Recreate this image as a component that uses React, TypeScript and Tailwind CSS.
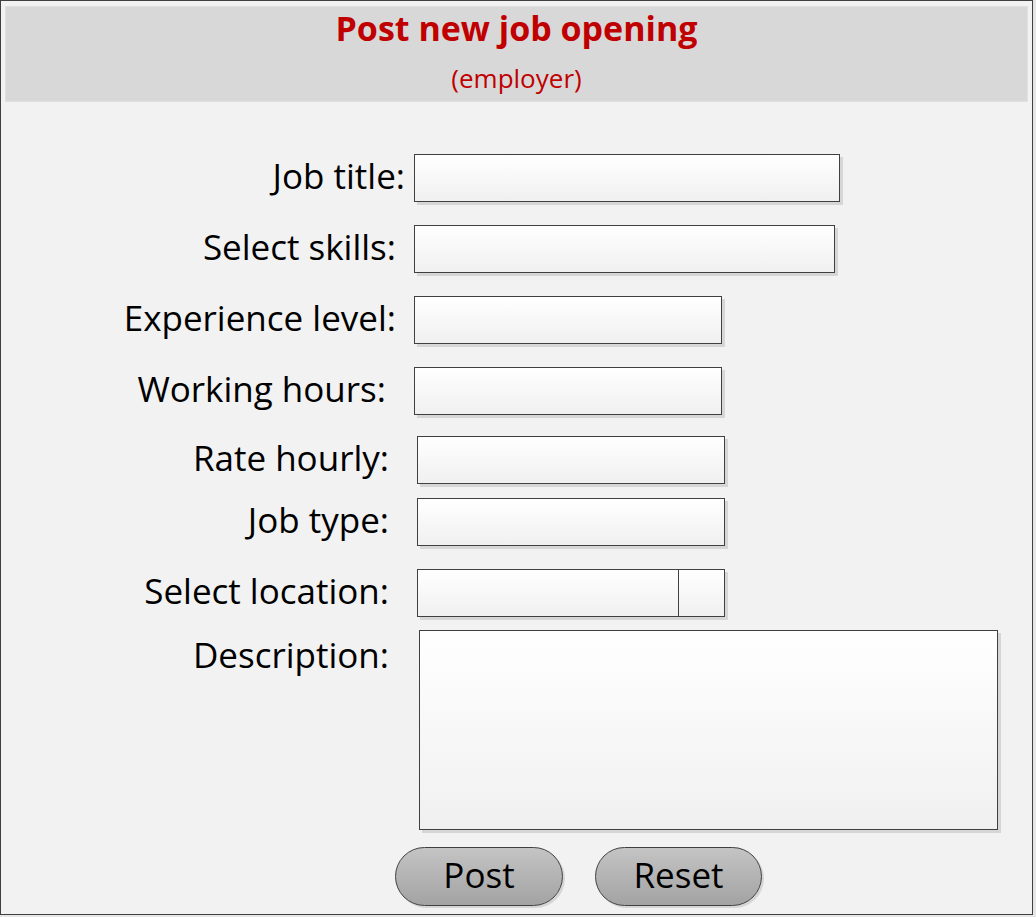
import React from 'react';

const font = { fontFamily: '"Open Sans", Lato, sans-serif' };

function Box({ className }: { className: string }) {
  return (
    <div
      className={
        'border border-[#404040] bg-gradient-to-b from-white to-[#f0f0f0] shadow-[3px_3px_0_#d6d6d6] ' +
        className
      }
    />
  );
}

export default function App() {
  return (
    <div className="w-[1036px] h-[917px] bg-[#e6e6e6]" style={font}>
      <div className="w-[1033px] h-[915px] border border-[#404040] bg-[#f2f2f2] flex flex-col">
        {/* header */}
        <div className="mx-[4px] mt-[5px] h-[96px] bg-[#d8d8d8] border border-[#e0e0e0] flex flex-col items-center">
          <h1 className="text-[34px] font-bold text-[#c00000] leading-none mt-[4px]">Post new job opening</h1>
          <p className="text-[26px] text-[#c00000] leading-none mt-[20px]">(employer)</p>
        </div>

        <div className="flex items-center mt-[52px] h-[48px] text-[35px] text-black">
          <div className="w-[404px] text-right leading-none mb-[5px]">Job title:</div>
          <Box className="ml-[9px] w-[426px] h-[48px]" />
        </div>

        <div className="flex items-center mt-[23px] h-[48px] text-[35px] text-black">
          <div className="w-[395px] text-right leading-none mb-[5px]">Select skills:</div>
          <Box className="ml-[18px] w-[421px] h-[48px]" />
        </div>

        <div className="flex items-center mt-[23px] h-[48px] text-[35px] text-black">
          <div className="w-[395px] text-right leading-none mb-[5px]">Experience level:</div>
          <Box className="ml-[18px] w-[308px] h-[48px]" />
        </div>

        <div className="flex items-center mt-[23px] h-[48px] text-[35px] text-black">
          <div className="w-[385px] text-right leading-none mb-[5px]">Working hours:</div>
          <Box className="ml-[28px] w-[308px] h-[48px]" />
        </div>

        <div className="flex items-center mt-[21px] h-[48px] text-[35px] text-black">
          <div className="w-[388px] text-right leading-none mb-[5px]">Rate hourly:</div>
          <Box className="ml-[28px] w-[308px] h-[48px]" />
        </div>

        <div className="flex items-center mt-[14px] h-[48px] text-[35px] text-black">
          <div className="w-[388px] text-right leading-none mb-[5px]">Job type:</div>
          <Box className="ml-[28px] w-[308px] h-[48px]" />
        </div>

        <div className="flex items-center mt-[23px] h-[48px] text-[35px] text-black">
          <div className="w-[388px] text-right leading-none mb-[5px]">Select location:</div>
          <div className="ml-[28px] w-[308px] h-[48px] flex border border-[#404040] bg-gradient-to-b from-white to-[#f0f0f0] shadow-[3px_3px_0_#d6d6d6]">
            <div className="flex-1 border-r border-[#404040]" />
            <div className="w-[45px]" />
          </div>
        </div>

        <div className="flex items-start mt-[13px] text-[35px] text-black">
          <div className="w-[388px] text-right leading-none mt-[7px]">Description:</div>
          <Box className="ml-[30px] w-[579px] h-[200px]" />
        </div>

        <div className="flex mt-[17px] text-[35px] text-black">
          <button className="ml-[394px] w-[168px] h-[59px] rounded-full border border-[#404040] bg-gradient-to-b from-[#c4c4c4] to-[#a3a3a3] shadow-[2px_2px_0_#d6d6d6] leading-none pb-[5px]">
            Post
          </button>
          <button className="ml-[32px] w-[167px] h-[59px] rounded-full border border-[#404040] bg-gradient-to-b from-[#c4c4c4] to-[#a3a3a3] shadow-[2px_2px_0_#d6d6d6] leading-none pb-[5px]">
            Reset
          </button>
        </div>
      </div>
    </div>
  );
}
